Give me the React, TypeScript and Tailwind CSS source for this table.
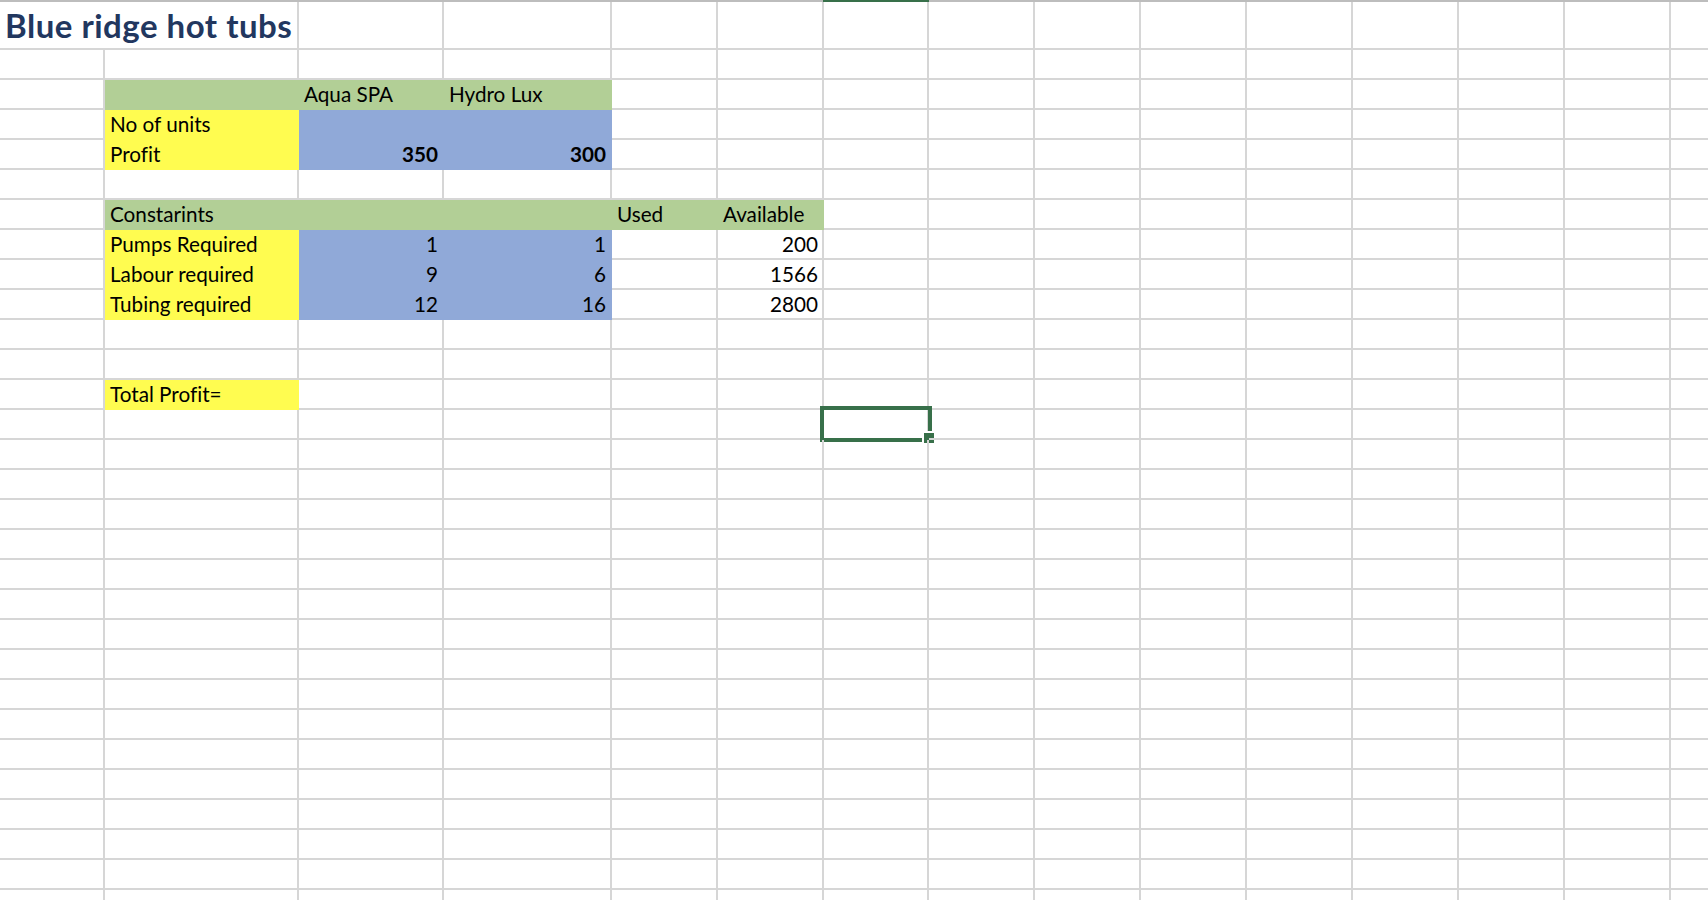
import React from "react";

type Fill = "g" | "y" | "b";
type CellData = { t?: string; f?: Fill; r?: boolean; b?: boolean };

const COLS = [
	"w-[105px]", "w-[194px]", "w-[145px]", "w-[168px]", "w-[106px]",
	"w-[106px]", "w-[105px]", "w-[106px]", "w-[106px]", "w-[106px]",
	"w-[106px]", "w-[106px]", "w-[106px]", "w-[106px]", "w-[200px]",
];

const FILLS: Record<Fill, string> = {
	g: "bg-[#b2cf96] border-[#b2cf96]",
	y: "bg-[#fffc50] border-[#fffc50]",
	b: "bg-[#90a9d8] border-[#90a9d8]",
};

// row index 0 is the title row (Excel row 1)
const sheet: Record<number, Record<number, CellData>> = {
	2: { 1: { f: "g" }, 2: { f: "g", t: "Aqua SPA" }, 3: { f: "g", t: "Hydro Lux" } },
	3: { 1: { f: "y", t: "No of units" }, 2: { f: "b" }, 3: { f: "b" } },
	4: { 1: { f: "y", t: "Profit" }, 2: { f: "b", t: "350", r: true, b: true }, 3: { f: "b", t: "300", r: true, b: true } },
	6: { 1: { f: "g", t: "Constarints" }, 2: { f: "g" }, 3: { f: "g" }, 4: { f: "g", t: "Used" }, 5: { f: "g", t: "Available" } },
	7: { 1: { f: "y", t: "Pumps Required" }, 2: { f: "b", t: "1", r: true }, 3: { f: "b", t: "1", r: true }, 5: { t: "200", r: true } },
	8: { 1: { f: "y", t: "Labour required" }, 2: { f: "b", t: "9", r: true }, 3: { f: "b", t: "6", r: true }, 5: { t: "1566", r: true } },
	9: { 1: { f: "y", t: "Tubing required" }, 2: { f: "b", t: "12", r: true }, 3: { f: "b", t: "16", r: true }, 5: { t: "2800", r: true } },
	12: { 1: { f: "y", t: "Total Profit=" } },
};

const ROWS = 30;

function SelectionBox() {
	return (
		<>
			<div className="absolute left-[-4px] top-[-4px] w-[112px] h-[36px] border-4 border-[#38704a]" />
			<div className="absolute left-[98px] top-[21px] w-[14px] h-[14px] bg-[#38704a] border-2 border-white" />
		</>
	);
}

function Cell({ col, row, data }: { col: number; row: number; data?: CellData }) {
	const fill = data?.f ? FILLS[data.f] : "border-[#d6d6d6]";
	const selected = row === 13 && col === 6;
	return (
		<div className={`${COLS[col]} relative shrink-0 h-full border-b-2 border-r-2 ${fill} pl-[5px] pr-[4px] whitespace-nowrap`}>
			{data?.t && (
				<div className={`leading-[28px] ${data.r ? "text-right" : "text-left"} ${data.b ? "font-bold" : ""}`}>
					{data.t}
				</div>
			)}
			{selected && <SelectionBox />}
		</div>
	);
}

function TitleRow() {
	return (
		<div className="flex h-[48px]">
			<div className="w-[105px] shrink-0 h-full border-b-2 border-[#d6d6d6] pl-[5px] whitespace-nowrap relative z-10">
				<span className="text-[33px] leading-[46px] font-bold tracking-[0.5px] text-[#22375f]">Blue ridge hot tubs</span>
			</div>
			{COLS.slice(1).map((w, i) => (
				<div key={i} className={`${w} shrink-0 h-full border-b-2 border-r-2 border-[#d6d6d6]`} />
			))}
		</div>
	);
}

export default function App() {
	return (
		<div className="w-[1708px] h-[900px] overflow-hidden bg-white text-black text-[20.7px] font-[Lato,sans-serif] [font-variant-ligatures:none]">
			<div className="flex h-[2px]">
				<div className="w-[823px] bg-[#bdbdbd]" />
				<div className="w-[106px] bg-[#38704a]" />
				<div className="flex-1 bg-[#bdbdbd]" />
			</div>
			<TitleRow />
			{Array.from({ length: ROWS - 1 }, (_, i) => i + 1).map((row) => (
				<div key={row} className="flex h-[30px]">
					{COLS.map((_, col) => (
						<Cell key={col} col={col} row={row} data={sheet[row]?.[col]} />
					))}
				</div>
			))}
		</div>
	);
}
